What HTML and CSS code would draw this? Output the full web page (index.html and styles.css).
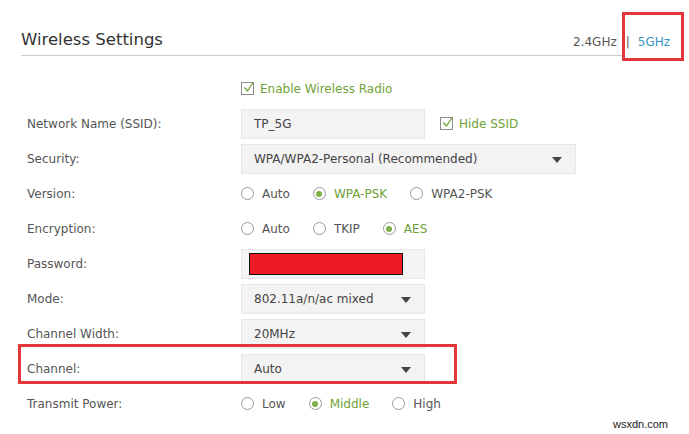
FILE: index.html
```html
<!DOCTYPE html>
<html>
<head>
<meta charset="utf-8">
<link rel="stylesheet" href="styles.css">
</head>
<body>
<div class="page">
  <div class="header">
    <h1 class="title">Wireless Settings</h1>
    <div class="bands">
      <span class="band">2.4GHz</span>
      <span class="sep">|</span>
      <span class="band active">5GHz</span>
    </div>
    <div class="mark mark-band"></div>
  </div>

  <div class="form">
    <div class="row">
      <div class="label"></div>
      <label class="check green"><span class="box"><svg viewBox="0 0 13 13" width="13" height="13"><path d="M2.5 6.5 L5.5 10 L11 1.5" fill="none" stroke="#6fa235" stroke-width="1.3"/></svg></span>Enable Wireless Radio</label>
    </div>
    <div class="row">
      <div class="label">Network Name (SSID):</div>
      <div class="input">TP_5G</div>
      <label class="check green hide"><span class="box"><svg viewBox="0 0 13 13" width="13" height="13"><path d="M2.5 6.5 L5.5 10 L11 1.5" fill="none" stroke="#6fa235" stroke-width="1.3"/></svg></span>Hide SSID</label>
    </div>
    <div class="row">
      <div class="label">Security:</div>
      <div class="input select wide">WPA/WPA2-Personal (Recommended)<span class="arrow"></span></div>
    </div>
    <div class="row">
      <div class="label">Version:</div>
      <div class="radios">
        <span class="radio"><span class="dot"></span>Auto</span>
        <span class="radio on"><span class="dot"></span>WPA-PSK</span>
        <span class="radio"><span class="dot"></span>WPA2-PSK</span>
      </div>
    </div>
    <div class="row">
      <div class="label">Encryption:</div>
      <div class="radios">
        <span class="radio"><span class="dot"></span>Auto</span>
        <span class="radio"><span class="dot"></span>TKIP</span>
        <span class="radio on"><span class="dot"></span>AES</span>
      </div>
    </div>
    <div class="row">
      <div class="label">Password:</div>
      <div class="input pass"><span class="redact"></span></div>
    </div>
    <div class="row">
      <div class="label">Mode:</div>
      <div class="input select">802.11a/n/ac mixed<span class="arrow"></span></div>
    </div>
    <div class="row">
      <div class="label">Channel Width:</div>
      <div class="input select">20MHz<span class="arrow"></span></div>
    </div>
    <div class="row marked">
      <div class="label">Channel:</div>
      <div class="input select">Auto<span class="arrow"></span></div>
      <div class="mark mark-channel"></div>
    </div>
    <div class="row">
      <div class="label">Transmit Power:</div>
      <div class="radios power">
        <span class="radio"><span class="dot"></span>Low</span>
        <span class="radio on"><span class="dot"></span>Middle</span>
        <span class="radio"><span class="dot"></span>High</span>
      </div>
    </div>
  </div>
  <div class="watermark">wsxdn.com</div>
</div>
</body>
</html>
```

FILE: styles.css
```css
html, body {
  margin: 0;
  padding: 0;
  background: #ffffff;
}
body {
  font-family: "DejaVu Sans", Verdana, sans-serif;
  font-size: 12px;
  color: #555555;
}
.page {
  width: 689px;
  height: 434px;
  position: relative;
  overflow: hidden;
}
.header {
  position: relative;
  margin: 0 0 0 21px;
  width: 601px;
  height: 55px;
  border-bottom: 1px solid #cccccc;
  display: flex;
  align-items: flex-end;
}
.title {
  margin: 0 0 5px 0;
  font-weight: normal;
  font-size: 16.5px;
  color: #333333;
  line-height: 20px;
}
.bands {
  position: absolute;
  left: 552px;
  top: 34px;
  width: 120px;
  display: flex;
  align-items: center;
  white-space: nowrap;
  z-index: 1;
  font-size: 12px;
  line-height: 16px;
}
.band { color: #555555; }
.sep { margin: 0 8px 0 9px; color: #555555; }
.band.active { color: #3795c0; }
.mark {
  position: absolute;
  border: 3px solid #e2373a;
  box-sizing: border-box;
  pointer-events: none;
}
.mark-band {
  left: 601px;
  top: 12px;
  width: 62px;
  height: 49px;
}
.form {
  margin-top: 15px;
  padding-left: 27px;
}
.row {
  position: relative;
  height: 35px;
  display: flex;
  align-items: center;
}
.label {
  width: 214px;
  flex: none;
  white-space: nowrap;
}
.check {
  display: flex;
  align-items: center;
  color: #6fa235;
}
.check .box {
  width: 13px;
  height: 13px;
  box-sizing: border-box;
  border: 1px solid #8c8c8c;
  margin-right: 6px;
  position: relative;
  display: inline-block;
}
.check .box svg {
  position: absolute;
  left: 0;
  top: -2px;
}
.check.hide { margin-left: 15px; }
.input {
  width: 184px;
  height: 30px;
  box-sizing: border-box;
  background: #f3f3f3;
  border: 1px solid #e7e7e7;
  padding-left: 12px;
  display: flex;
  align-items: center;
  position: relative;
  color: #444444;
  white-space: nowrap;
}
.input.wide { width: 335px; }
.arrow {
  position: absolute;
  right: 13px;
  top: 12px;
  width: 0;
  height: 0;
  border-left: 5px solid transparent;
  border-right: 5px solid transparent;
  border-top: 6px solid #444444;
}
.pass { padding-left: 7px; }
.redact {
  width: 154px;
  height: 22px;
  box-sizing: border-box;
  background: #ed1c24;
  border: 1px solid #111111;
}
.radios {
  display: flex;
  align-items: center;
  gap: 23px;
}
.radio {
  display: flex;
  align-items: center;
  white-space: nowrap;
}
.radio .dot {
  width: 13px;
  height: 13px;
  box-sizing: border-box;
  border: 1px solid #9a9a9a;
  border-radius: 50%;
  margin-right: 8px;
  position: relative;
  background: #ffffff;
}
.radio.on { color: #6fa235; }
.radio.on .dot::after {
  content: "";
  position: absolute;
  left: 2.5px;
  top: 2.5px;
  width: 6px;
  height: 6px;
  border-radius: 50%;
  background: #7ab144;
}
.mark-channel {
  left: -9px;
  top: -7px;
  width: 439px;
  height: 40px;
}
.watermark {
  position: absolute;
  right: 21px;
  bottom: 4px;
  font-family: "Liberation Sans", Arial, sans-serif;
  font-size: 11px;
  color: #222222;
}
```
